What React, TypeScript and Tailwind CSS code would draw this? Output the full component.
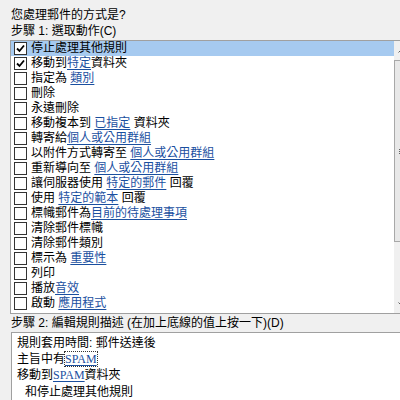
import React from 'react'

type Part = { t: string; link?: boolean }

const actions: Part[][] = [
  [{ t: '停止處理其他規則' }],
  [{ t: '移動到' }, { t: '特定', link: true }, { t: '資料夾' }],
  [{ t: '指定為 ' }, { t: '類別', link: true }],
  [{ t: '刪除' }],
  [{ t: '永遠刪除' }],
  [{ t: '移動複本到 ' }, { t: '已指定', link: true }, { t: ' 資料夾' }],
  [{ t: '轉寄給' }, { t: '個人或公用群組', link: true }],
  [{ t: '以附件方式轉寄至 ' }, { t: '個人或公用群組', link: true }],
  [{ t: '重新導向至 ' }, { t: '個人或公用群組', link: true }],
  [{ t: '讓伺服器使用 ' }, { t: '特定的郵件', link: true }, { t: ' 回覆' }],
  [{ t: '使用 ' }, { t: '特定的範本', link: true }, { t: ' 回覆' }],
  [{ t: '標幟郵件為' }, { t: '目前的待處理事項', link: true }],
  [{ t: '清除郵件標幟' }],
  [{ t: '清除郵件類別' }],
  [{ t: '標示為 ' }, { t: '重要性', link: true }],
  [{ t: '列印' }],
  [{ t: '播放' }, { t: '音效', link: true }],
  [{ t: '啟動 ' }, { t: '應用程式', link: true }],
]

const checked = [0, 1]

const CheckBox = ({ on }: { on: boolean }) => (
  <span className="w-[13px] h-[13px] border border-[#333333] bg-white flex items-center justify-center shrink-0">
    {on && (
      <svg width="11" height="11" viewBox="0 0 11 11">
        <path d="M2 5.5 L4.5 8 L9 2.5" fill="none" stroke="#000" strokeWidth="1.8" />
      </svg>
    )}
  </span>
)

const Link = ({ children }: { children: React.ReactNode }) => (
  <span className="text-[#1a4f9f] underline underline-offset-2">{children}</span>
)

const Spam = ({ focus }: { focus?: boolean }) => (
  <span
    className={
      "text-[#1a4f9f] underline underline-offset-2 font-['Liberation_Serif',serif] " +
      (focus ? 'outline outline-1 outline-dotted outline-[#333333]' : '')
    }
  >
    SPAM
  </span>
)

const App = () => {
  return (
    <div className="w-[400px] h-[400px] bg-[#f0f0f0] overflow-hidden text-[12px] leading-[15px] text-black font-['Liberation_Sans','Noto_Sans_CJK_TC',sans-serif]">
      <div className="pt-[8px] pl-[11px]">
        <div className="h-[16px] whitespace-nowrap">您處理郵件的方式是?</div>
        <div className="h-[16px] whitespace-nowrap">步驟 1: 選取動作(C)</div>
      </div>

      <div className="ml-[10px] w-[402px] h-[274px] border border-[#a0a0a0] bg-white flex">
        <div className="w-[383px] flex flex-col">
          {actions.map((parts, i) => (
            <div
              key={i}
              className={
                'h-[15px] flex items-center gap-[4px] pl-[3px] whitespace-nowrap ' +
                (i === 0 ? 'bg-[#a6caf0]' : '')
              }
            >
              <CheckBox on={checked.includes(i)} />
              <span>
                {parts.map((p, j) =>
                  p.link ? <Link key={j}>{p.t}</Link> : <span key={j} className="whitespace-pre">{p.t}</span>
                )}
              </span>
            </div>
          ))}
        </div>
        <div className="w-[17px] bg-[#f0f0f0] flex flex-col">
          <div className="h-[19px] flex items-center justify-center">
            <svg width="9" height="5" viewBox="0 0 9 5">
              <path d="M0.5 4.5 L4.5 0.5 L8.5 4.5" fill="none" stroke="#606060" strokeWidth="1" />
            </svg>
          </div>
          <div className="h-[182px] border border-[#a8a8a8] bg-[#e8e8e8] flex items-center justify-center">
            <div className="flex flex-col gap-[1px]">
              <div className="w-[7px] h-[1px] bg-[#606060]" />
              <div className="w-[7px] h-[1px] bg-[#606060]" />
              <div className="w-[7px] h-[1px] bg-[#606060]" />
            </div>
          </div>
          <div className="flex-1" />
          <div className="h-[17px] flex items-center justify-center">
            <svg width="9" height="5" viewBox="0 0 9 5">
              <path d="M0.5 0.5 L4.5 4.5 L8.5 0.5" fill="none" stroke="#606060" strokeWidth="1" />
            </svg>
          </div>
        </div>
      </div>

      <div className="h-[18px] pl-[11px] pt-[2px] whitespace-nowrap">
        步驟 2: 編輯規則描述 (在加上底線的值上按一下)(D)
      </div>

      <div className="ml-[11px] w-[400px] h-[80px] border border-[#a0a0a0] bg-white pl-[5px] pt-[2px] leading-[16px] whitespace-nowrap">
        <div>規則套用時間: 郵件送達後</div>
        <div>
          主旨中有<Spam focus />
        </div>
        <div>
          移動到<Spam />資料夾
        </div>
        <div className="pl-[8px] pt-[1px]">和停止處理其他規則</div>
      </div>
    </div>
  )
}

export default App
